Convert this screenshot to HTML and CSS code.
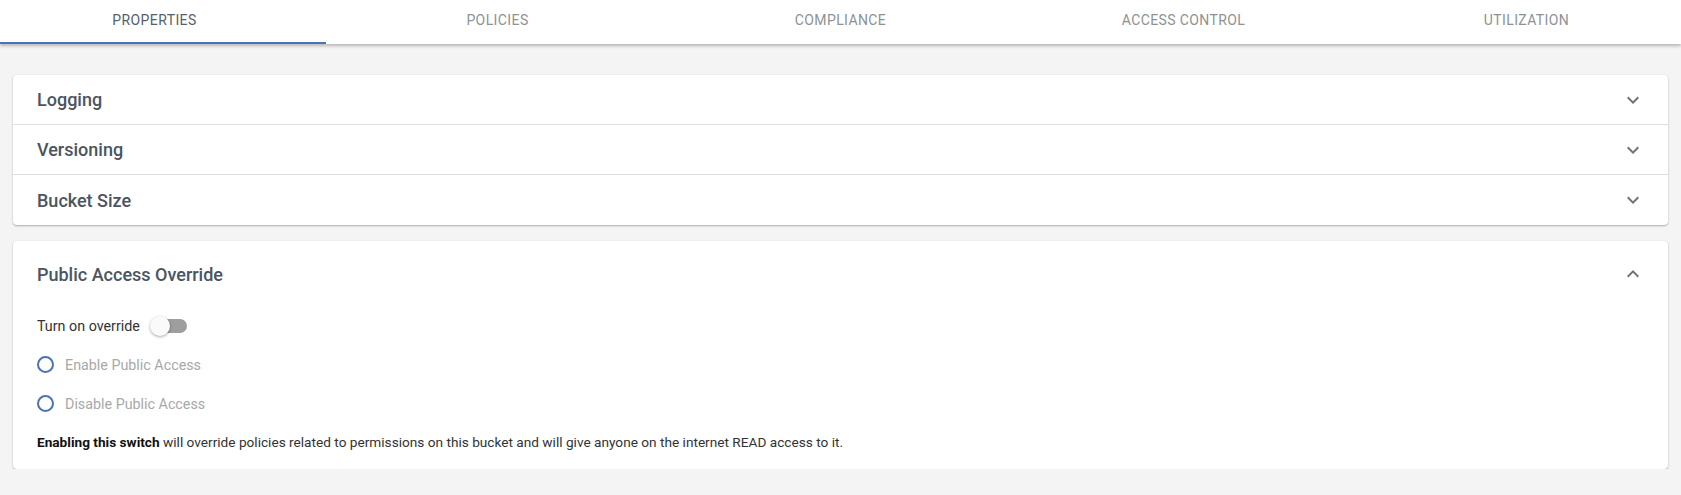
FILE: index.html
```html
<!DOCTYPE html>
<html lang="en">
<head>
<meta charset="utf-8">
<title>Bucket Properties</title>
<link rel="stylesheet" href="styles.css">
</head>
<body>
<div class="tabbar">
  <div class="tabs">
    <div class="tab active">Properties</div>
    <div class="tab">Policies</div>
    <div class="tab">Compliance</div>
    <div class="tab">Access Control</div>
    <div class="tab">Utilization</div>
  </div>
</div>
<main class="content">
  <section class="card">
    <div class="row">
      <span class="title">Logging</span>
      <svg class="chev" viewBox="0 0 24 24"><path d="M16.59 8.59L12 13.17 7.41 8.59 6 10l6 6 6-6z"/></svg>
    </div>
    <div class="row">
      <span class="title">Versioning</span>
      <svg class="chev" viewBox="0 0 24 24"><path d="M16.59 8.59L12 13.17 7.41 8.59 6 10l6 6 6-6z"/></svg>
    </div>
    <div class="row last">
      <span class="title">Bucket Size</span>
      <svg class="chev" viewBox="0 0 24 24"><path d="M16.59 8.59L12 13.17 7.41 8.59 6 10l6 6 6-6z"/></svg>
    </div>
  </section>
  <section class="card">
    <div class="panel-head">
      <span class="title">Public Access Override</span>
      <svg class="chev" viewBox="0 0 24 24"><path d="M12 8l-6 6 1.41 1.41L12 10.83l4.59 4.58L18 14z"/></svg>
    </div>
    <div class="panel-body">
      <div class="toggle-row">
        <span class="toggle-label">Turn on override</span>
        <span class="switch"><span class="track"></span><span class="thumb"></span></span>
      </div>
      <div class="radio-row"><span class="radio"></span><span class="radio-label">Enable Public Access</span></div>
      <div class="radio-row"><span class="radio"></span><span class="radio-label">Disable Public Access</span></div>
      <p class="desc"><strong>Enabling this switch</strong> will override policies related to permissions on this bucket and will give anyone on the internet READ access to it.</p>
    </div>
  </section>
</main>
</body>
</html>
```

FILE: styles.css
```css
* { box-sizing: border-box; }
html, body {
  margin: 0;
  padding: 0;
  background: #f4f4f4;
  font-family: Roboto, "Liberation Sans", Arial, sans-serif;
  overflow: hidden;
}
.tabbar {
  background: #fff;
  height: 44px;
  box-shadow: 0 2px 3px rgba(0,0,0,0.25);
  position: relative;
  z-index: 1;
  overflow: hidden;
}
.tabs {
  display: flex;
  height: 44px;
  margin: 0 -17px;
}
.tab {
  flex: 1 1 0;
  display: flex;
  align-items: center;
  justify-content: center;
  padding-bottom: 3px;
  font-size: 14px;
  letter-spacing: 0.4px;
  text-transform: uppercase;
  color: #8d9296;
  border-bottom: 2px solid transparent;
}
.tab.active {
  color: #56606b;
  border-bottom-color: #4a72b8;
}
.content {
  padding: 31px 13px 0;
  display: flex;
  flex-direction: column;
  gap: 16px;
}
.card {
  background: #fff;
  border-radius: 4px;
  box-shadow: 0 1px 2px rgba(0,0,0,0.3), 0 0 1px rgba(0,0,0,0.06);
}
.row {
  height: 50px;
  display: flex;
  align-items: center;
  justify-content: space-between;
  padding: 0 23px 0 24px;
  border-bottom: 1px solid #dedede;
}
.row.last { border-bottom: none; }
.title {
  font-size: 18px;
  font-weight: 500;
  color: #4a5561;
}
.chev {
  width: 24px;
  height: 24px;
  fill: #737373;
}
.panel-head {
  height: 66px;
  display: flex;
  align-items: center;
  justify-content: space-between;
  padding: 0 23px 0 24px;
}
.panel-body {
  padding: 0 24px 17px;
}
.toggle-row {
  height: 38px;
  display: flex;
  align-items: center;
  gap: 10px;
}
.toggle-label {
  font-size: 14.3px;
  color: #333;
}
.switch {
  position: relative;
  width: 38px;
  height: 20px;
  display: inline-block;
}
.track {
  position: absolute;
  left: 3px;
  top: 3px;
  width: 34px;
  height: 14px;
  border-radius: 7px;
  background: #9e9e9e;
}
.thumb {
  position: absolute;
  left: 0;
  top: 0;
  width: 20px;
  height: 20px;
  border-radius: 50%;
  background: #fafafa;
  box-shadow: 0 1px 3px rgba(0,0,0,0.35);
}
.radio-row {
  height: 39px;
  display: flex;
  align-items: center;
  gap: 11px;
}
.radio {
  width: 17px;
  height: 17px;
  border: 2px solid #4a72b8;
  border-radius: 50%;
}
.radio-label {
  font-size: 14.3px;
  color: #a8a8a8;
}
.desc {
  margin: 0;
  padding-top: 9px;
  font-size: 13.65px;
  line-height: 20px;
  color: #333;
}
.desc strong {
  color: #111;
  font-weight: 700;
}
```
